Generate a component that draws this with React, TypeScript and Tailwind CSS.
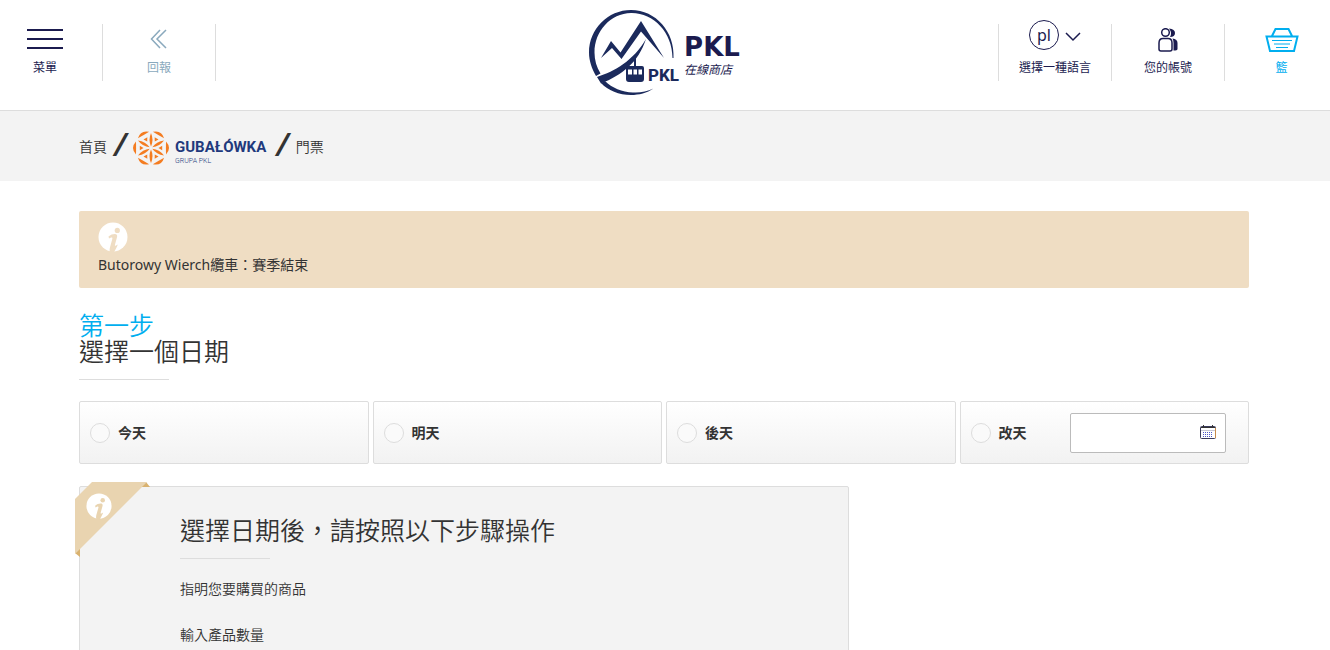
import React from 'react';

function InfoIcon({ className }: { className?: string }) {
  return (
    <svg viewBox="0 0 30 30" className={className} aria-hidden="true">
      <mask id="info-mask">
        <rect width="30" height="30" fill="#fff" />
        <circle cx="19.3" cy="8.4" r="2.6" fill="#000" />
        <path d="M10.500 14.600C12.500 12.800 14.700 12 16.800 12C19 12 19.600 13.300 19 15.200L17 22.500C16.700 23.700 17 24 18 23.600L19.800 22.600C19 25 17.200 28.500 16 30H12C11.400 28.500 11.600 26.800 12 25.200L14.300 17C14.600 15.700 14.200 15.200 13.100 15.600L11 16.600Z" fill="#000" />
      </mask>
      <circle cx="15" cy="15" r="14.5" fill="#fff" mask="url(#info-mask)" />
    </svg>
  );
}

function PklLogo() {
  return (
    <svg viewBox="0 0 92 88" className="h-[88px] w-[92px]" role="img" aria-label="PKL">
      <g fill="#1b2a5c">
        {/* ring */}
        <path d="M85.500 50C87 24 68 2 43 2C20 2 1 21 1 44.500C1 53 4 61 8 68L12.500 65.500C8.500 59 6.500 52 6.500 44.500C6.500 23 22.500 5.500 43 5C65 4.500 84.500 24 84.500 50Z" />
        <path d="M13 75C20 82.500 31 87 43 87C51 87 59 85 65.500 80.500C59 83.500 52 85 45 84.500C34 84 24 80 17 73Z" />
        {/* cable and mountains */}
        <path d="M9 69C27 63 45 53 58 31C50 55 34 67 13 75.500Z" />
        <path d="M13 50L23 33L32.500 44.500L53 13L76 50L53 23.500L33.500 51L24 40Z" />
        {/* gondola */}
        <rect x="46" y="47" width="2" height="12" />
        <path fillRule="evenodd" d="M40 58H54Q56 58 56 60V71Q56 74 53 74H41Q38 74 38 71V60Q38 58 40 58ZM40 61.500H44V66.500H40ZM45.500 61.500H49V66.500H45.500ZM50.500 61.500H54V66.500H50.500Z" />
        <text x="60" y="73" className="font-['Roboto',sans-serif] text-[17px] font-extrabold">PKL</text>
      </g>
    </svg>
  );
}

function GubalowkaLogo() {
  return (
    <svg viewBox="0 0 136 38" className="h-[38px] w-[136px]" role="img" aria-label="Gubałówka Grupa PKL">
      <g fill="#f47c20">
        {[0, 60, 120, 180, 240, 300].map((angle) => (
          <g key={angle} transform={`rotate(${angle} 18 20)`}>
            <path d="M18 18.500Q15 12 18 5Q21 12 18 18.500Z" />
            <g transform="rotate(30 18 20)">
              <path d="M11.500 5Q18 -1 24.500 5Q18 5.200 11.500 5Z" />
              <path d="M18 12.500L15.800 8.800H20.200Z" />
            </g>
          </g>
        ))}
      </g>
      <g fill="#1f3a7d">
        <text x="42" y="24" className="font-['Roboto',sans-serif] text-[15px] font-bold">GUBAŁÓWKA</text>
        <text x="42" y="35" className="font-['Roboto',sans-serif] text-[7px]">GRUPA PKL</text>
      </g>
    </svg>
  );
}

function CalendarIcon() {
  return (
    <svg viewBox="0 0 16 14" className="h-3.5 w-4" aria-hidden="true">
      <rect x=".5" y="1.5" width="15" height="12" rx="1" fill="#fff" stroke="#3b3b5c" />
      <path d="M1 2.500H15M3.500 0V3M12.500 0V3" stroke="#333" />
      <path d="M1 5.500H15" stroke="#c9c9d6" />
      <path d="M3 7.500H13M3 9.500H13M3 11.500H13" stroke="#4f57c8" strokeDasharray="1 1" />
      <path d="M15.500 3V13" stroke="#c98a4b" />
    </svg>
  );
}

function Slash() {
  return <span className="pb-1.5 font-['Open_Sans',sans-serif] text-[32px] leading-8 font-semibold italic" aria-hidden="true">/</span>;
}

function DateOption({ label, children }: { label: string; children?: React.ReactNode }) {
  return (
    <div className="flex h-[63px] items-center rounded-xs border border-[#dddddd] bg-linear-to-b from-white to-[#f2f2f2] px-2.5">
      <label className="flex items-center gap-2 text-sm font-bold">
        <input
          type="radio"
          name="date"
          className="size-5 appearance-none rounded-full border border-[#dddddd] bg-[#fafafa] checked:border-[#00aeef] checked:bg-[#00aeef]"
        />
        {label}
      </label>
      {children}
    </div>
  );
}

function Header() {
  return (
    <header className="grid h-[111px] grid-cols-[1fr_auto_1fr] border-b border-[#dddddd] text-xs leading-4 text-[#1b1b4f]">
      <div className="flex items-start pt-6">
        <button className="flex h-[57px] w-[103px] flex-col items-center border-r border-[#dddddd] pt-1 pr-3">
          <svg viewBox="0 0 38 22" className="h-[22px] w-[38px]" aria-hidden="true">
            <path d="M1 2H37M1 11H37M1 20H37" stroke="currentColor" strokeWidth="2" />
          </svg>
          <span className="mt-2.5">菜單</span>
        </button>
        <a href="#" className="flex h-[57px] w-[113px] flex-col items-center border-r border-[#dddddd] pt-1 text-[#8aa9bd]">
          <svg viewBox="0 0 18 22" className="h-[22px] w-[18px]" fill="none" stroke="currentColor" strokeWidth="1.5" aria-hidden="true">
            <path d="M10 2L1.500 11L10 20M16 2L7 11L16 20" />
          </svg>
          <span className="mt-2.5">回報</span>
        </a>
      </div>

      <a href="#" className="flex items-start gap-1 pt-2 pr-0.5">
        <PklLogo />
        <span className="flex flex-col pt-6">
          <span className="font-['DejaVu_Sans',sans-serif] text-[26px] leading-[30px] font-bold">PKL</span>
          <span className="italic">在線商店</span>
        </span>
      </a>

      <div className="flex items-start justify-end pt-6">
        <button className="flex h-[57px] w-[113px] flex-col items-center border-l border-[#dddddd]">
          <span className="-mt-1 flex items-center gap-1.5">
            <span className="flex size-[30px] items-center justify-center rounded-full border border-current text-base leading-5">pl</span>
            <svg viewBox="0 0 16 10" className="mt-1 h-2.5 w-4" fill="none" stroke="currentColor" strokeWidth="1.5" aria-hidden="true">
              <path d="M1 1L8 8L15 1" />
            </svg>
          </span>
          <span className="mt-2.5">選擇一種語言</span>
        </button>
        <button className="flex h-[57px] w-[113px] flex-col items-center border-l border-[#dddddd] pt-1">
          <svg viewBox="0 0 20 24" className="h-6 w-5" fill="none" stroke="currentColor" strokeWidth="1.5" aria-hidden="true">
            <circle cx="7.5" cy="4.500" r="3.800" />
            <path d="M1 21V15Q1 10.500 5 10.500H10Q14 10.500 14 15V21Q14 23 12 23H3Q1 23 1 21Z" />
            <path d="M11 .5Q17 1 17 5Q17 9 12 9Q14.500 5 11 .5Z" fill="currentColor" stroke="none" />
            <path d="M14.500 10.500Q19.500 11 19.500 15V21Q19.500 22.500 15.500 22.500V15Q15.500 12 14.500 10.500Z" fill="currentColor" stroke="none" />
          </svg>
          <span className="mt-2">您的帳號</span>
        </button>
        <a href="#" className="flex h-[57px] w-[106px] flex-col items-center border-l border-[#dddddd] pt-1 pl-2 text-[#00aeef]">
          <svg viewBox="0 0 34 24" className="h-6 w-[34px]" fill="none" stroke="currentColor" strokeWidth="2" aria-hidden="true">
            <path d="M1.500 8.500H32.500L29 23H5ZM7 8L10.500 1H23.500L27 8" />
            <path d="M7 12.500H27M9 16H25M11 19.500H23" strokeWidth="1" />
          </svg>
          <span className="mt-2">籃</span>
        </a>
      </div>
    </header>
  );
}

export default function App() {
  return (
    <div className="h-screen overflow-hidden bg-white font-['Noto_Sans','Noto_Sans_CJK_TC',sans-serif] text-sm text-[#333333]">
      <Header />

      <div className="bg-[#f3f3f3] pr-0.5">
        <nav className="mx-auto flex h-[70px] max-w-[1170px] items-center gap-[7px] pt-0.5 font-[350]">
          <a href="#">首頁</a>
          <Slash />
          <a href="#"><GubalowkaLogo /></a>
          <Slash />
          <a href="#">門票</a>
        </nav>
      </div>

      <div className="pr-0.5">
        <main className="mx-auto max-w-[1170px] pt-[30px]">
          <div className="rounded-xs bg-[#efddc3] px-[19px] pt-[11px] pb-[13px]">
            <InfoIcon className="size-[30px]" />
            <p className="mt-[3px] leading-5">Butorowy Wierch纜車：賽季結束</p>
          </div>

          <h2 className="mt-6 text-[25px] leading-[26px] font-[350]">
            <span className="block text-[#00aeef]">第一步</span>
            <span className="block">選擇一個日期</span>
          </h2>
          <hr className="mt-[15px] w-[90px] border-[#dddddd]" />

          <div className="mt-[21px] grid grid-cols-4 gap-1">
            <DateOption label="今天" />
            <DateOption label="明天" />
            <DateOption label="後天" />
            <DateOption label="改天">
              <div className="relative mr-3 ml-auto">
                <input type="text" aria-label="改天" className="block h-10 w-[156px] rounded-xs border border-[#bbbbbb] bg-white px-2" />
                <button className="absolute top-3 right-2.5" aria-label="改天">
                  <CalendarIcon />
                </button>
              </div>
            </DateOption>
          </div>

          <section className="relative mt-[22px] max-w-[770px] rounded-xs border border-[#dddddd] bg-[#f3f3f3] pt-[30px] pb-10 pl-[100px]">
            <div className="absolute -top-[5px] -left-[5px]">
              <svg viewBox="0 0 75 75" className="size-[75px]" aria-hidden="true">
                <path d="M66 0H71L75 5H66ZM0 66V71L5 75V66Z" fill="#d9b26f" />
                <path d="M0 17L17 0H72L0 72Z" fill="#e9d4b0" />
              </svg>
              <InfoIcon className="absolute top-[11px] left-[11px] size-[26px]" />
            </div>
            <h3 className="text-[25px] leading-[26px] font-[350]">選擇日期後，請按照以下步驟操作</h3>
            <hr className="mt-[15px] w-[90px] border-[#dddddd]" />
            <p className="mt-5 leading-5 font-[350]">指明您要購買的商品</p>
            <p className="mt-[26px] leading-5 font-[350]">輸入產品數量</p>
          </section>
        </main>
      </div>
    </div>
  );
}
